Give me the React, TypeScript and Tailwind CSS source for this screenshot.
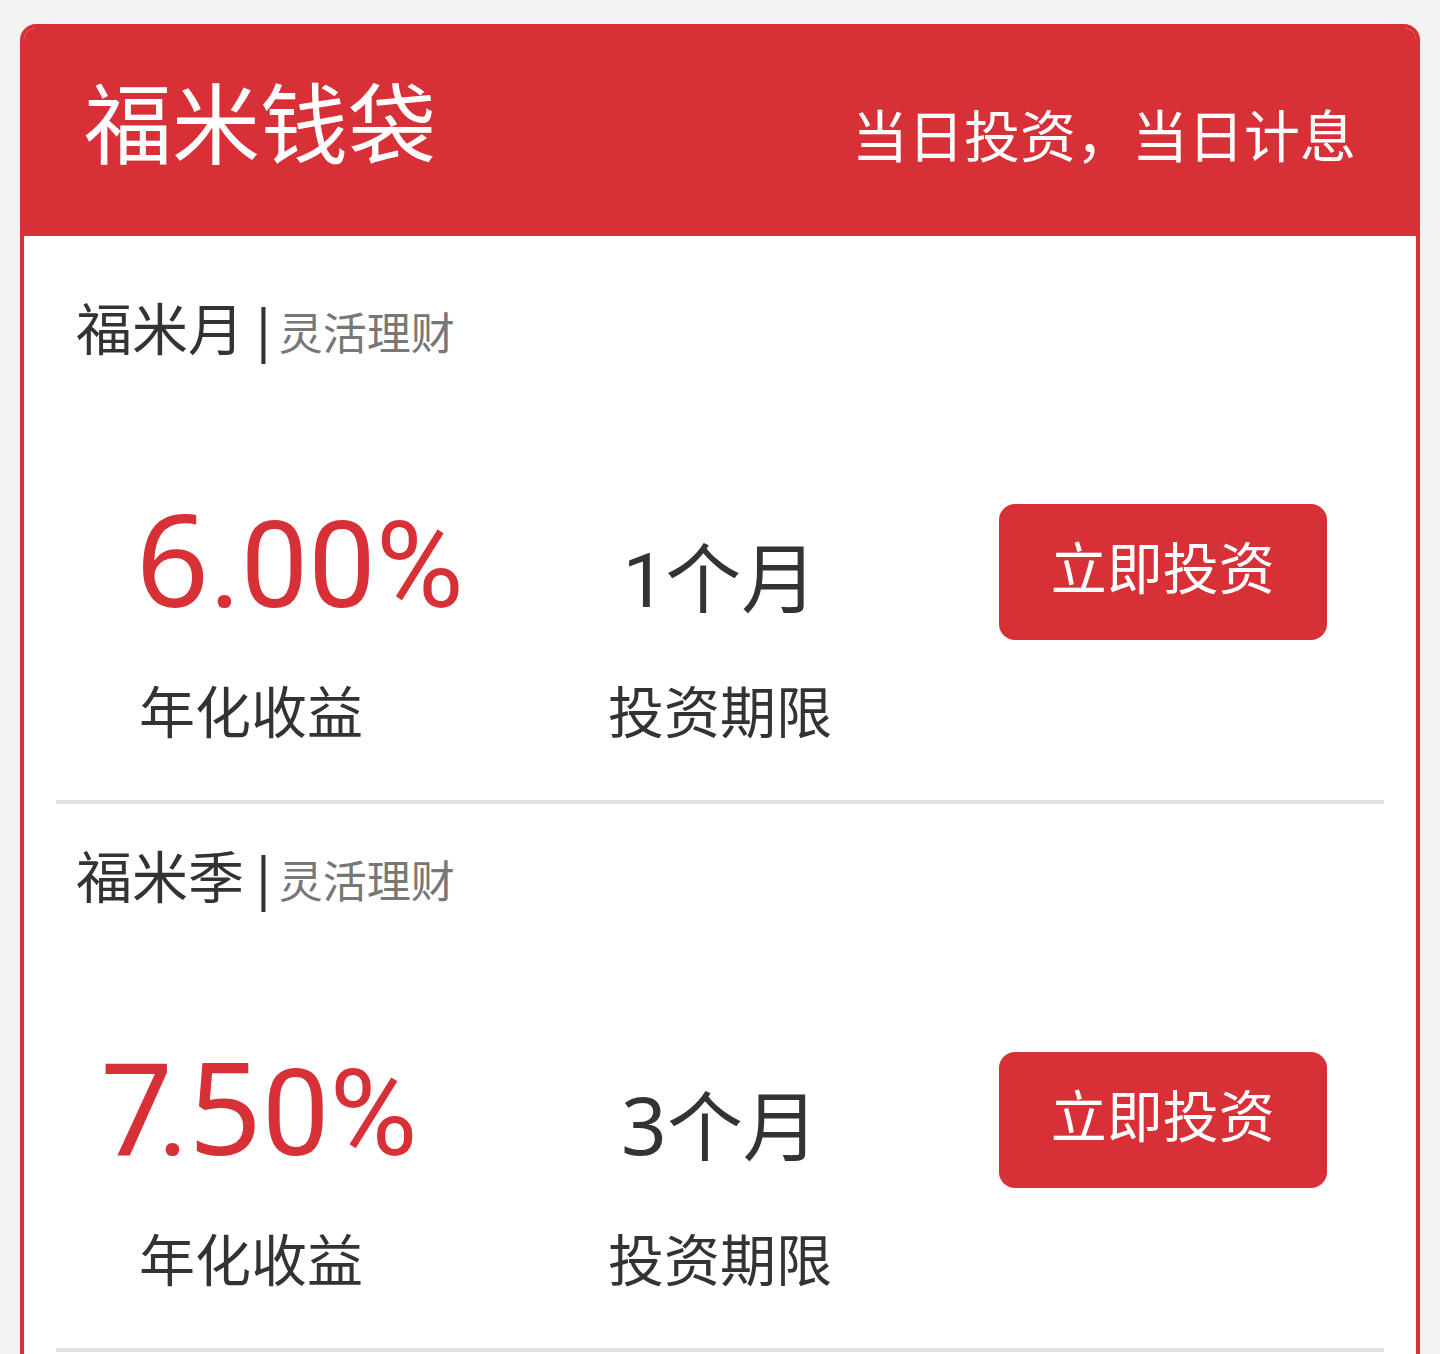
import React from "react";

type Plan = {
  name: string;
  tag: string;
  rate: React.ReactNode;
  rateIndent: string;
  term: React.ReactNode;
};

function BigDigit({ children }: { children: React.ReactNode }) {
  return <span className="font-['Noto_Sans'] text-[128px]">{children}</span>;
}

const plans: Plan[] = [
  {
    name: "福米月",
    tag: "灵活理财",
    rate: (
      <>
        <BigDigit>6</BigDigit>.00%
      </>
    ),
    rateIndent: "pl-20",
    term: "1",
  },
  {
    name: "福米季",
    tag: "灵活理财",
    rate: (
      <>
        <BigDigit>7</BigDigit>
        <span className="-ml-4">.</span>
        <BigDigit>5</BigDigit>0%
      </>
    ),
    rateIndent: "pl-11",
    term: <span className="font-['Noto_Sans'] text-[80px]">3</span>,
  },
];

function PlanCard({ plan }: { plan: Plan }) {
  return (
    <article className="border-b-4 border-[#e0e0e0] pt-9 pb-[46px]">
      <h2 className="pl-5 font-['Noto_Sans','Noto_Sans_CJK_SC',sans-serif] text-[56px] leading-[72px]">
        {plan.name}
        <span className="ml-1">|</span>
        <small className="text-[44px] text-[#777]">{plan.tag}</small>
      </h2>
      <div className="mt-[135px] grid grid-cols-3 items-baseline">
        <p className={`${plan.rateIndent} text-[120px] leading-[108px] whitespace-nowrap text-[#d73036]`}>
          {plan.rate}
        </p>
        <p className="text-center text-[76px] leading-[108px] whitespace-nowrap">
          {plan.term}个月
        </p>
        <button
          type="button"
          className="row-span-2 h-[136px] w-[328px] self-start justify-self-center rounded-2xl bg-[#d73036] pb-1 text-[56px] leading-none text-white"
        >
          立即投资
        </button>
        <p className="mt-[39px] pl-[83px] text-[56px] leading-[80px]">年化收益</p>
        <p className="mt-[39px] text-center text-[56px] leading-[80px]">投资期限</p>
      </div>
    </article>
  );
}

export default function App() {
  return (
    <main
      lang="zh-CN"
      className="flex min-h-screen flex-col bg-[#f3f3f3] px-5 pt-6 font-['Roboto','Noto_Sans_CJK_SC',sans-serif] text-[#333]"
    >
      <section className="flex-1 rounded-t-2xl border-4 border-b-0 border-[#d73036] bg-white">
        <header className="flex h-52 items-baseline justify-between rounded-t-xl bg-[#d73036] px-15 pt-[55px] text-white">
          <h1 className="text-[88px] leading-none">福米钱袋</h1>
          <p className="text-[56px] leading-none">当日投资，当日计息</p>
        </header>
        <div className="px-8 pt-5">
          {plans.map((plan) => (
            <PlanCard key={plan.name} plan={plan} />
          ))}
        </div>
      </section>
    </main>
  );
}
